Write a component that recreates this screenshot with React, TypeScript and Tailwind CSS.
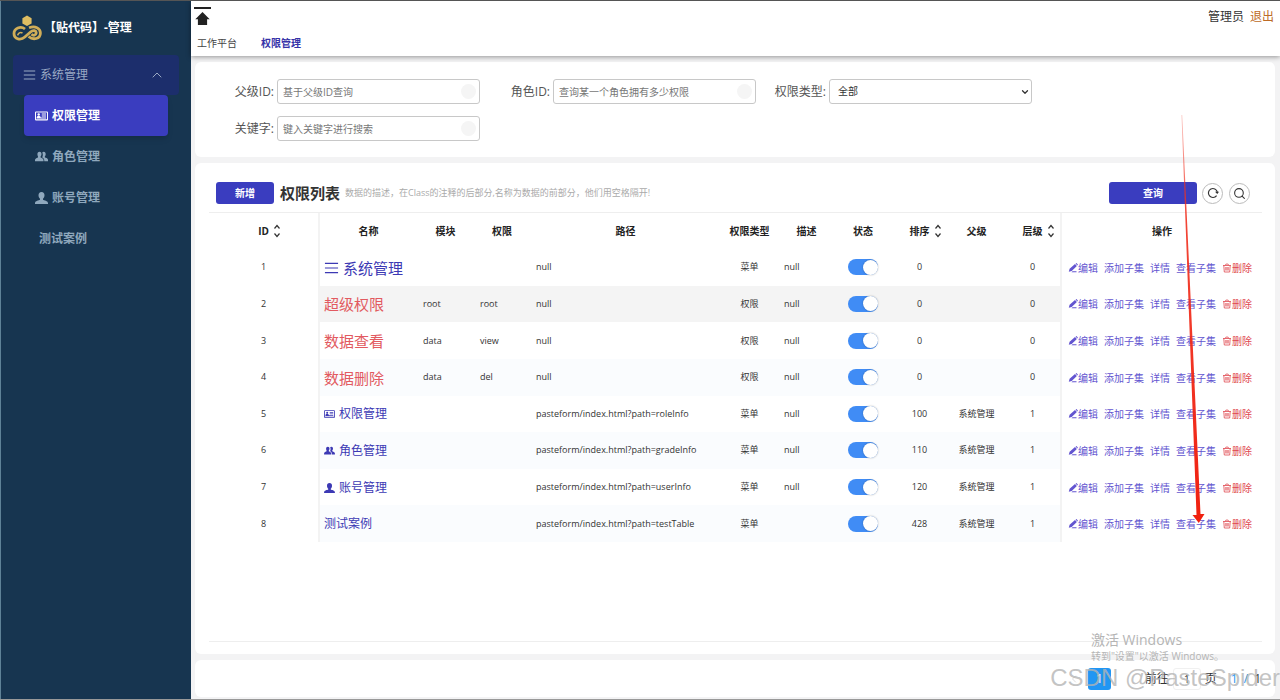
import type { ReactNode } from 'react'
import { ChevronUp, ChevronDown, ChevronLeft, Search } from 'lucide-react'

type Row = {
  id: number
  name: string
  icon?: string
  big?: boolean
  danger?: boolean
  module?: string
  role?: string
  path: string
  type: string
  desc?: string
  sort: number
  parent?: string
  level: number
}

const rows: Row[] = [
  { id: 1, name: '系统管理', icon: 'menu', big: true, path: 'null', type: '菜单', desc: 'null', sort: 0, level: 0 },
  { id: 2, name: '超级权限', big: true, danger: true, module: 'root', role: 'root', path: 'null', type: '权限', desc: 'null', sort: 0, level: 0 },
  { id: 3, name: '数据查看', big: true, danger: true, module: 'data', role: 'view', path: 'null', type: '权限', desc: 'null', sort: 0, level: 0 },
  { id: 4, name: '数据删除', big: true, danger: true, module: 'data', role: 'del', path: 'null', type: '权限', desc: 'null', sort: 0, level: 0 },
  { id: 5, name: '权限管理', icon: 'card', path: 'pasteform/index.html?path=roleInfo', type: '菜单', desc: 'null', sort: 100, parent: '系统管理', level: 1 },
  { id: 6, name: '角色管理', icon: 'group', path: 'pasteform/index.html?path=gradeInfo', type: '菜单', desc: 'null', sort: 110, parent: '系统管理', level: 1 },
  { id: 7, name: '账号管理', icon: 'user', path: 'pasteform/index.html?path=userInfo', type: '菜单', desc: 'null', sort: 120, parent: '系统管理', level: 1 },
  { id: 8, name: '测试案例', path: 'pasteform/index.html?path=testTable', type: '菜单', sort: 428, parent: '系统管理', level: 1 },
]

const menuItems = [
  { name: '权限管理', icon: 'card', active: true },
  { name: '角色管理', icon: 'group' },
  { name: '账号管理', icon: 'user' },
  { name: '测试案例' },
]

function Icon({ name, className }: { name: string; className?: string }) {
  if (name === 'menu') {
    return (
      <svg viewBox="0 0 16 14" className={className} fill="none" stroke="currentColor" strokeWidth="1.3">
        <path d="M1 2h14M1 7h14M1 12h14" />
      </svg>
    )
  }
  if (name === 'card') {
    return (
      <svg viewBox="0 0 13 12" className={className} fill="currentColor">
        <path fillRule="evenodd" d="M1 1.500h11a1 1 0 0 1 1 1v7a1 1 0 0 1-1 1H1a1 1 0 0 1-1-1v-7a1 1 0 0 1 1-1ZM1 2.500v6.800h11V2.500Z" />
        <circle cx="3.7" cy="4.5" r="1.2" />
        <path d="M1.600 8c0-3 4.200-3 4.200 0ZM6.800 3.500H11v1H6.800ZM6.800 5.400H11v1H6.800ZM1.600 7.400H11v1H1.600Z" />
      </svg>
    )
  }
  if (name === 'group') {
    return (
      <svg viewBox="0 0 13 12" className={className} fill="currentColor">
        <path d="M4.500.8c1.400 0 2.100 1 2 2.500 0 1-.4 1.800-.9 2.300v.8c.8.500 2.700.8 2.900 2.300v1.500H0V8.700c.2-1.500 2.200-1.800 3-2.300v-.8C2.700 5.100 2.400 4.300 2.400 3.300c0-1.500.7-2.500 2.100-2.500Z" />
        <path d="M8.700.8c1.400 0 2 1 2 2.400 0 1-.4 1.800-.9 2.300v.8c.8.500 3 .9 3.200 2.400v1.500H9.300c.1-2.500-.8-3.200-2-3.800V5.900c.7-1.500.7-3 0-4.500.3-.4.800-.6 1.400-.6Z" />
      </svg>
    )
  }
  return (
    <svg viewBox="0 0 13 12" className={className} fill="currentColor">
      <path d="M6.500 0c2 0 3 1.300 3 3.300 0 1.500-.6 2.800-1.500 3.500v1c1.200.7 4.700 1 5 3.200v1H0v-1c.3-2.200 3.800-2.500 5-3.200v-1C4.100 6.100 3.500 4.800 3.500 3.300 3.500 1.300 4.500 0 6.500 0Z" />
    </svg>
  )
}

function Logo() {
  return (
    <svg viewBox="0 0 30 26" className="h-[26px] w-[30px]" fill="none" stroke="#d0ad58" strokeWidth="2.8">
      <path d="M15 .6l4.600 2.600v5.400L15 11l-4.600-2.400V3.200Z" fill="#dfbd62" stroke="none" />
      <path d="M10.500 18C8 16.500 6.500 18.500 5.500 20.300" strokeWidth="1.6" />
      <path d="M13 14C8.500 10.500 2 13.500 2 18.500 2 24.500 9 25.500 12.800 22l5.700-5c2.800-2.500 6-1.300 5.700 1.200-.3 2.300-2.800 2.800-4.700 1" />
      <path d="M17 12.800C23 10.500 28.400 13 28.400 18c0 6-7.200 7.500-11.800 3.500" />
    </svg>
  )
}

function Sidebar() {
  return (
    <aside className="w-[191px] shrink-0 border-l border-[#5f8297] bg-[#173550]">
      <div className="flex h-[54px] items-center pl-[11px] text-xs font-bold text-white">
        <Logo />
        <span className="ml-[2px]">【贴代码】-管理</span>
      </div>
      <nav className="mx-3">
        <button className="flex h-10 w-full items-center rounded bg-[#1c2e6c] pl-[10px] pr-[14px] text-xs text-[#9aa9c4]">
          <Icon name="menu" className="mr-1 h-3 w-[13px]" />
          系统管理
          <ChevronUp className="ml-auto size-4" strokeWidth={1.5} />
        </button>
        <ul className="mx-[11px]">
          {menuItems.map((item) => (
            <li key={item.name}>
              <a
                href="#"
                className={`flex h-[41px] items-center gap-1 rounded text-xs font-bold ${item.icon ? 'pl-[11px]' : 'pl-[15px]'} ${
                  item.active ? 'bg-[#3a3dbf] text-white shadow-md' : 'text-[#8fa8bd]'
                }`}
              >
                {item.icon && <Icon name={item.icon} className="h-3 w-[13px]" />}
                {item.name}
              </a>
            </li>
          ))}
        </ul>
      </nav>
    </aside>
  )
}

function Header() {
  return (
    <header className="relative z-10 flex h-[55px] justify-between bg-white px-[6px] shadow-[0_1px_5px_rgba(0,0,0,0.4)]">
      <div className="flex flex-col">
        <button aria-label="返回顶部" className="-ml-[3px] mt-[6px] w-fit text-[#222]">
          <svg viewBox="0 0 17 19" className="h-[19px] w-[17px]" fill="currentColor">
            <path d="M0 0h17v2H0ZM8.500 5l7.200 7.200h-2.600V18H3.900v-5.800H1.300Z" />
          </svg>
        </button>
        <nav className="mt-[9px] flex gap-6 text-[10px] leading-4">
          <a href="#" className="text-[#444]">工作平台</a>
          <a href="#" className="font-bold text-[#3532a8]">权限管理</a>
        </nav>
      </div>
      <div className="flex h-8 items-center gap-[6px] text-xs text-[#333]">
        <span>管理员</span>
        <a href="#" className="text-[#bd6b26]">退出</a>
      </div>
    </header>
  )
}

function Field({ id, label, children }: { id: string; label: string; children: ReactNode }) {
  return (
    <div className="flex h-[25px] w-[246px] items-center justify-end gap-[3px]">
      <label htmlFor={id} className="whitespace-nowrap text-xs text-[#555]">{label}:</label>
      {children}
    </div>
  )
}

const inputClass = 'h-[25px] w-[203px] rounded-[3px] border border-[#c8c8c8] bg-white text-[10px] text-[#333] placeholder:text-[#777]'

function TextInput({ id, placeholder }: { id: string; placeholder: string }) {
  return (
    <span className="relative flex shrink-0">
      <input id={id} className={`${inputClass} pl-[5px]`} placeholder={placeholder} />
      <span className="absolute right-1 top-[5px] size-[15px] rounded-full bg-[#f5f5f5]" />
    </span>
  )
}

function Filters() {
  return (
    <form className="flex min-h-[95px] flex-wrap content-start gap-x-[30px] gap-y-3 rounded-md bg-white pb-4 pl-[39px] pt-[17px]">
      <Field id="parentId" label="父级ID">
        <TextInput id="parentId" placeholder="基于父级ID查询" />
      </Field>
      <Field id="roleId" label="角色ID">
        <TextInput id="roleId" placeholder="查询某一个角色拥有多少权限" />
      </Field>
      <Field id="type" label="权限类型">
        <span className="relative flex shrink-0">
          <select id="type" className={`${inputClass} appearance-none pl-2`}>
            <option>全部</option>
          </select>
          <ChevronDown className="pointer-events-none absolute right-[2px] top-2 size-[10px] text-[#333]" strokeWidth={3} />
        </span>
      </Field>
      <Field id="keyword" label="关键字">
        <TextInput id="keyword" placeholder="键入关键字进行搜索" />
      </Field>
    </form>
  )
}

function Sortable({ children }: { children: ReactNode }) {
  return (
    <span className="flex items-center justify-center gap-1 pl-3">
      {children}
      <svg viewBox="0 0 8 14" className="h-[14px] w-2" fill="none" stroke="#333" strokeWidth="1.2">
        <path d="M1.500 4.500L4 1.500l2.500 3M1.500 9.500L4 12.500l2.500-3" />
      </svg>
    </span>
  )
}

function Actions() {
  return (
    <div className="flex items-center gap-[6px] whitespace-nowrap pl-[6px] pt-px text-[10px] leading-4 text-[#6355d0]">
      <a href="#" className="flex items-center">
        <svg viewBox="0 0 10 10" className="size-[10px]" fill="currentColor">
          <path d="M7 1l1.900 1.900-5.200 5-2.900.8.800-2.900ZM7.600.6l.8-.5 1.500 1.500-.6.800ZM4.500 8.200H8.500v1H3.500Z" />
        </svg>
        编辑
      </a>
      <a href="#">添加子集</a>
      <a href="#">详情</a>
      <a href="#">查看子集</a>
      <a href="#" className="flex items-center text-[#e0484f]">
        <svg viewBox="0 0 10 10" className="size-[10px]" fill="none" stroke="currentColor" strokeWidth=".8">
          <path d="M1 2.500h8M3.200 2.300c0-1.800 3.600-1.800 3.600 0M1.800 2.500l.5 6.500h5.400l.5-6.500M3.800 4v3.500M5 4v3.500M6.200 4v3.500" />
        </svg>
        删除
      </a>
    </div>
  )
}

function PermissionTable() {
  return (
    <table className="h-[329px] w-full table-fixed text-center text-[9px] leading-4 text-[#333]">
      <colgroup>
        <col className="w-[110px]" />
        <col className="w-[98px]" />
        <col className="w-[57px]" />
        <col className="w-[56px]" />
        <col />
        <col className="w-[57px]" />
        <col className="w-[57px]" />
        <col className="w-[56px]" />
        <col className="w-[57px]" />
        <col className="w-[57px]" />
        <col className="w-[56px]" />
        <col className="w-[201px]" />
      </colgroup>
      <thead>
        <tr className="h-9 text-[10px] font-bold text-[#222]">
          <th><Sortable>ID</Sortable></th>
          <th className="border-l-2 border-[#f3f3f3]">名称</th>
          <th>模块</th>
          <th>权限</th>
          <th>路径</th>
          <th className="whitespace-nowrap">权限类型</th>
          <th>描述</th>
          <th>状态</th>
          <th><Sortable>排序</Sortable></th>
          <th>父级</th>
          <th><Sortable>层级</Sortable></th>
          <th className="border-l-2 border-[#f3f3f3]">操作</th>
        </tr>
      </thead>
      <tbody>
        {rows.map((row) => (
          <tr key={row.id} className="group h-9">
            <td>{row.id}</td>
            <td className="border-l-2 border-[#f3f3f3] pl-1 pt-px text-left group-even:bg-[#fafcfe] group-nth-2:bg-[#f4f4f4]">
              <span
                className={`flex items-center gap-1 whitespace-nowrap leading-5 ${row.big ? 'text-[15px]' : 'text-xs'} ${
                  row.danger ? 'text-[#e25a60]' : 'text-[#3c39b4]'
                }`}
              >
                {row.icon && <Icon name={row.icon} className={row.big ? 'h-[14px] w-[15px]' : 'h-[10px] w-[11px]'} />}
                {row.name}
              </span>
            </td>
            <td className="pl-[6px] text-left group-even:bg-[#fafcfe] group-nth-2:bg-[#f4f4f4]">{row.module}</td>
            <td className="pl-[6px] text-left group-even:bg-[#fafcfe] group-nth-2:bg-[#f4f4f4]">{row.role}</td>
            <td className="pl-[6px] text-left group-even:bg-[#fafcfe] group-nth-2:bg-[#f4f4f4]">{row.path}</td>
            <td className="group-even:bg-[#fafcfe] group-nth-2:bg-[#f4f4f4]">{row.type}</td>
            <td className="pl-[6px] text-left group-even:bg-[#fafcfe] group-nth-2:bg-[#f4f4f4]">{row.desc}</td>
            <td className="group-even:bg-[#fafcfe] group-nth-2:bg-[#f4f4f4]">
              <label className="mx-auto flex h-4 w-[30px] cursor-pointer items-center justify-end rounded-full bg-[#408cf5]">
                <input
                  type="checkbox"
                  role="switch"
                  defaultChecked
                  aria-label="状态"
                  className="size-[15px] appearance-none rounded-full bg-white shadow-[0_0_2px_rgba(0,0,0,0.3)]"
                />
              </label>
            </td>
            <td className="group-even:bg-[#fafcfe] group-nth-2:bg-[#f4f4f4]">{row.sort}</td>
            <td className="group-even:bg-[#fafcfe] group-nth-2:bg-[#f4f4f4]">{row.parent}</td>
            <td className="group-even:bg-[#fafcfe] group-nth-2:bg-[#f4f4f4]">{row.level}</td>
            <td className="border-l-2 border-[#f3f3f3]"><Actions /></td>
          </tr>
        ))}
      </tbody>
    </table>
  )
}

function ListCard() {
  return (
    <section className="flex grow flex-col rounded-md bg-white pb-3 pl-[14px] pr-[13px] pt-[19px]">
      <div className="mb-2 flex h-[22px] items-center pl-[7px] pr-3">
        <button className="h-[22px] w-[58px] rounded-[3px] bg-[#3a3dbf] text-[10px] font-bold text-white">新增</button>
        <h1 className="ml-[6px] text-[15px] font-bold text-[#333]">权限列表</h1>
        <p className="ml-[5px] text-[9px] text-[#aaa]">数据的描述，在Class的注释的后部分,名称为数据的前部分，他们用空格隔开!</p>
        <button className="ml-auto h-[22px] w-[88px] rounded-[3px] bg-[#3a3dbf] text-[10px] font-bold text-white">查询</button>
        <button aria-label="刷新" className="ml-[5px] flex size-[21px] items-center justify-center rounded-full border border-[#bbb] text-[#333]">
          <svg viewBox="0 0 12 12" className="size-3" fill="none" stroke="currentColor" strokeWidth="1.2">
            <path d="M9.600 8.600A4.500 4.500 0 1 1 10.300 5" />
            <path d="M8 4.800h4L10.300 7Z" fill="currentColor" stroke="none" />
          </svg>
        </button>
        <button aria-label="搜索" className="ml-[6px] flex size-[21px] items-center justify-center rounded-full border border-[#bbb] text-[#333]">
          <Search className="size-[13px]" />
        </button>
      </div>
      <div className="grow border-y border-[#eee]">
        <PermissionTable />
      </div>
    </section>
  )
}

function Pager() {
  return (
    <footer className="flex h-[37px] items-center justify-end rounded-md bg-white pr-[14px] text-xs text-[#333]">
      <button aria-label="上一页" className="mr-2 text-[#ddd]">
        <ChevronLeft className="size-3" />
      </button>
      <button aria-current="page" className="h-[22px] w-[23px] rounded-[3px] bg-[#2196f3] text-white">1</button>
      <label htmlFor="page" className="ml-[34px]">前往</label>
      <input id="page" defaultValue="1" className="ml-1 h-[22px] w-7 rounded-[3px] border border-[#f0f0f0] text-center text-[10px]" />
      <span className="ml-1">页</span>
      <span className="ml-[14px] text-[#2196f3]">1</span>
      <span className="ml-[6px] text-[#2196f3]">/</span>
      <span className="ml-[6px]">1</span>
    </footer>
  )
}

export default function App() {
  return (
    <div className="relative flex min-h-screen overflow-hidden border-b border-[#999] border-t border-t-[#555] bg-[#f3f3f4] font-['Open_Sans','Noto_Sans_CJK_SC',sans-serif]">
      <Sidebar />
      <div className="flex min-w-0 grow flex-col">
        <Header />
        <main className="flex grow flex-col gap-[6px] pb-[2px] pl-1 pr-[5px] pt-[6px]">
          <Filters />
          <ListCard />
          <Pager />
        </main>
      </div>

      {/* pointer down to the last row's link */}
      <svg viewBox="0 0 30 412" className="pointer-events-none absolute right-[70px] top-[112px] z-20 h-[412px] w-[30px]">
        <defs>
          <linearGradient id="fade" x1="0" y1="0" x2="0" y2="1">
            <stop offset="0" stopColor="#f0301f" stopOpacity="0.3" />
            <stop offset="0.25" stopColor="#f0301f" stopOpacity="0.9" />
            <stop offset="1" stopColor="#f0200f" />
          </linearGradient>
        </defs>
        <path d="M1.500 2h.7L20.500 401L24.500 401L18.800 410L12.500 402L16.500 402Z" fill="url(#fade)" />
      </svg>

      <div className="pointer-events-none absolute bottom-9 right-14 z-20 text-[#b5b5b5]">
        <p className="text-sm leading-[18px]">激活 Windows</p>
        <p className="text-[10px] leading-[14px]">转到"设置"以激活 Windows。</p>
      </div>
      <div className="pointer-events-none absolute bottom-[7px] right-0 z-20 whitespace-nowrap font-['Liberation_Sans',sans-serif] text-2xl leading-7 text-[#b4b4b4]/80">
        CSDN @PasteSpider
      </div>
    </div>
  )
}
